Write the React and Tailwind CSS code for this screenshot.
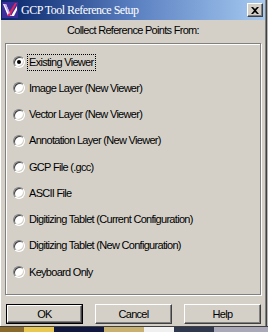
import React from 'react';

const options = [
  'Existing Viewer',
  'Image Layer (New Viewer)',
  'Vector Layer (New Viewer)',
  'Annotation Layer (New Viewer)',
  'GCP File (.gcc)',
  'ASCII File',
  'Digitizing Tablet (Current Configuration)',
  'Digitizing Tablet (New Configuration)',
  'Keyboard Only',
];

const AppIcon = () => (
  <svg width="16" height="16" viewBox="0 0 16 16">
    <rect x="0" y="0" width="16" height="16" fill="#3b2f9a" />
    <path d="M1 2 L6 14 L9 14 L4 2 Z" fill="#ffffff" />
    <path d="M5 14 L13 1 L15 1 L8 14 Z" fill="#e0265a" />
    <path d="M9 14 L15 4 L15 8 L12 14 Z" fill="#ffffff" />
    <path d="M2 2 L4 2 L8 11 L7 12 Z" fill="#c8a8e8" />
  </svg>
);

const Radio = ({ checked }) => (
  <span className="relative w-[12px] h-[12px] rounded-full bg-white border border-t-[#808080] border-l-[#808080] border-r-white border-b-white shadow-[inset_1px_1px_0_#404040,inset_-1px_-1px_0_#d4d0c8] shrink-0 flex items-center justify-center">
    {checked && <span className="w-[4px] h-[4px] rounded-full bg-black" />}
  </span>
);

const Button = ({ label, isDefault }) => (
  <div className={`w-[77px] h-[20px] ${isDefault ? 'border border-black' : ''}`}>
    <div className="w-full h-full flex items-center justify-center border border-t-white border-l-white border-r-[#404040] border-b-[#404040] shadow-[inset_-1px_-1px_0_#808080] text-black">
      {label}
    </div>
  </div>
);

export default function App() {
  return (
    <div
      className="w-[268px] h-[332px] bg-[#d4d0c8] flex flex-col overflow-hidden text-[11px] tracking-[-0.7px]"
      style={{ fontFamily: '"Liberation Sans", Arial, sans-serif' }}
    >
      <div className="flex w-[268px] h-[326px]">
        <div className="w-[265px] flex flex-col border-l border-white">
          {/* Title bar */}
          <div className="h-[20px] flex items-center pl-[1px] pr-[2px] bg-gradient-to-r from-[#0a246a] via-[#5a7fc0] to-[#a6caf0]">
            <AppIcon />
            <span
              className="ml-[3px] text-white text-[12px] tracking-[-0.5px] leading-none"
              style={{ fontFamily: '"Liberation Serif", "Times New Roman", serif' }}
            >
              GCP Tool Reference Setup
            </span>
            <div className="flex-1" />
            <div className="w-[16px] h-[14px] bg-[#d4d0c8] border border-t-white border-l-white border-r-[#404040] border-b-[#404040] shadow-[inset_-1px_-1px_0_#808080] flex items-center justify-center">
              <svg width="8" height="7" viewBox="0 0 8 7">
                <path d="M0 0 L2 0 L4 2 L6 0 L8 0 L5 3.5 L8 7 L6 7 L4 5 L2 7 L0 7 L3 3.5 Z" fill="#000" />
              </svg>
            </div>
          </div>

          {/* Header */}
          <div className="h-[23px] flex items-center justify-center pb-[2px] text-black">
            Collect Reference Points From:
          </div>

          {/* Group box */}
          <div className="mx-[4px] h-[252px] border border-[#808080] shadow-[inset_1px_1px_0_#fff,1px_1px_0_#fff] pt-[5px] flex flex-col">
            {options.map((opt, i) => (
              <div key={opt} className="h-[26.25px] flex items-center pl-[7px] text-black">
                <Radio checked={i === 0} />
                <span
                  className={`ml-[2px] px-[1px] leading-[15px] ${
                    i === 0 ? 'border border-dotted border-black' : 'border border-transparent'
                  }`}
                >
                  {opt}
                </span>
              </div>
            ))}
          </div>

          {/* Buttons */}
          <div className="flex items-center pl-[5px] pt-[9px] gap-[12px]">
            <Button label="OK" isDefault />
            <Button label="Cancel" />
            <Button label="Help" />
          </div>
        </div>
        <div className="w-[1px] bg-[#808080]" />
        <div className="w-[1px] bg-[#404040]" />
        <div className="w-[1px] bg-[#b8b8b8]" />
      </div>
      {/* desktop strip below window */}
      <div className="h-[6px] flex border-t border-[#404040]">
        <div className="w-[24px] bg-[#8a6a2a]" />
        <div className="w-[30px] bg-[#e8c850]" />
        <div className="w-[50px] bg-[#101840]" />
        <div className="w-[40px] bg-[#c8b070]" />
        <div className="w-[30px] bg-[#f0f0f0]" />
        <div className="w-[40px] bg-[#303850]" />
        <div className="flex-1 bg-[#a8a8b8]" />
      </div>
    </div>
  );
}
